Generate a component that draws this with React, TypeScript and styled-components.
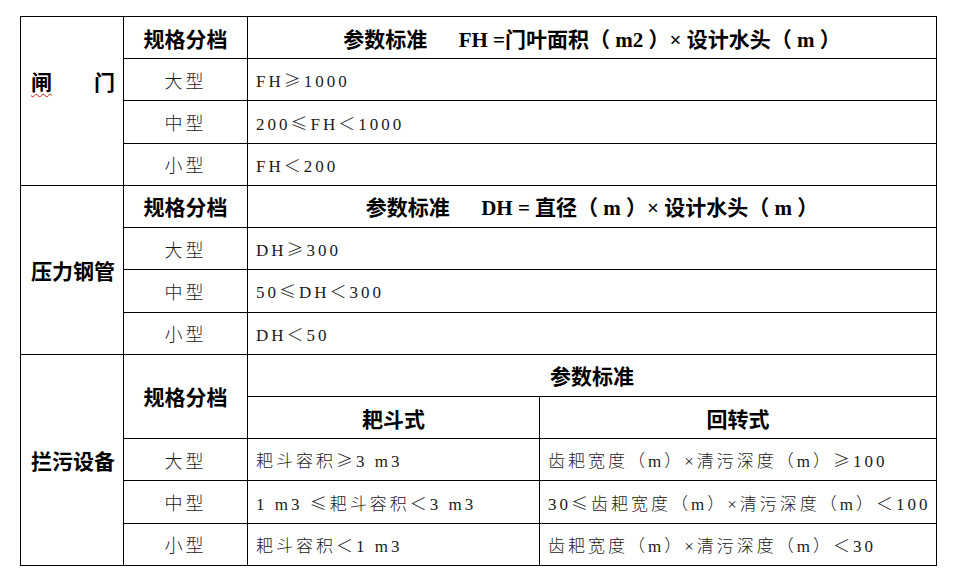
import styled, { createGlobalStyle } from "styled-components";

const GlobalStyle = createGlobalStyle`
  html, body {
    margin: 0;
    padding: 0;
    background: #ffffff;
  }
`;

type Row = { size: string; a: string; b?: string };

const gateRows: Row[] = [
  { size: "大型", a: "FH≥1000" },
  { size: "中型", a: "200≤FH＜1000" },
  { size: "小型", a: "FH＜200" },
];

const pipeRows: Row[] = [
  { size: "大型", a: "DH≥300" },
  { size: "中型", a: "50≤DH＜300" },
  { size: "小型", a: "DH＜50" },
];

const rackRows: Row[] = [
  { size: "大型", a: "耙斗容积≥3 m3", b: "齿耙宽度（m）×清污深度（m）≥100" },
  { size: "中型", a: "1 m3 ≤耙斗容积＜3 m3", b: "30≤齿耙宽度（m）×清污深度（m）＜100" },
  { size: "小型", a: "耙斗容积＜1 m3", b: "齿耙宽度（m）×清污深度（m）＜30" },
];

// the ≥ / ≤ signs come out wide in the original, so take them from the CJK face
const withSigns = (text: string) =>
  text.split(/([≥≤])/).map((part, i) =>
    part === "≥" || part === "≤" ? <Styled.Sign key={i}>{part}</Styled.Sign> : part
  );

export default function App() {
  return (
    <Styled.Page>
      <GlobalStyle />
      <Styled.Table>
        <colgroup>
          <col style={{ width: 103 }} />
          <col style={{ width: 124 }} />
          <col style={{ width: 292 }} />
          <col style={{ width: 397 }} />
        </colgroup>
        <tbody>
          <Styled.Tr>
            <Styled.Label rowSpan={4} $lift>
              <Styled.Spread>
                <Styled.Squiggle>闸</Styled.Squiggle>
                <span>门</span>
              </Styled.Spread>
            </Styled.Label>
            <Styled.Head>规格分档</Styled.Head>
            <Styled.Head colSpan={2}>
              参数标准&nbsp;&nbsp;&nbsp;&nbsp;&nbsp;&nbsp;FH =门叶面积（ m2 ）× 设计水头（ m ）
            </Styled.Head>
          </Styled.Tr>
          {gateRows.map((r) => (
            <Styled.Tr key={"g" + r.size}>
              <Styled.Size>{r.size}</Styled.Size>
              <Styled.Body colSpan={2}>{withSigns(r.a)}</Styled.Body>
            </Styled.Tr>
          ))}

          <Styled.Tr>
            <Styled.Label rowSpan={4}>压力钢管</Styled.Label>
            <Styled.Head>规格分档</Styled.Head>
            <Styled.Head colSpan={2}>
              参数标准&nbsp;&nbsp;&nbsp;&nbsp;&nbsp;&nbsp;DH = 直径（ m ）× 设计水头（ m ）
            </Styled.Head>
          </Styled.Tr>
          {pipeRows.map((r) => (
            <Styled.Tr key={"p" + r.size}>
              <Styled.Size>{r.size}</Styled.Size>
              <Styled.Body colSpan={2}>{withSigns(r.a)}</Styled.Body>
            </Styled.Tr>
          ))}

          <Styled.Tr>
            <Styled.Label rowSpan={5}>拦污设备</Styled.Label>
            <Styled.Head rowSpan={2}>规格分档</Styled.Head>
            <Styled.Head colSpan={2}>参数标准</Styled.Head>
          </Styled.Tr>
          <Styled.Tr>
            <Styled.Head>耙斗式</Styled.Head>
            <Styled.Head>回转式</Styled.Head>
          </Styled.Tr>
          {rackRows.map((r) => (
            <Styled.Tr key={"r" + r.size}>
              <Styled.Size>{r.size}</Styled.Size>
              <Styled.Body>{withSigns(r.a)}</Styled.Body>
              <Styled.Body>{withSigns(r.b ?? "")}</Styled.Body>
            </Styled.Tr>
          ))}
        </tbody>
      </Styled.Table>
    </Styled.Page>
  );
}

const Styled = {
  Page: styled.div`
    width: 958px;
    height: 585px;
    box-sizing: border-box;
    padding: 16px 0 0 20px;
    background: #ffffff;
  `,
  Table: styled.table`
    border-collapse: collapse;
    table-layout: fixed;
    width: 917px;
    color: #000;
  `,
  Tr: styled.tr`
    height: 42.23px;
  `,
  Label: styled.td<{ $lift?: boolean }>`
    border: 1px solid #000;
    padding: ${(p) => (p.$lift ? "0 8px 40px 10px" : "0 6px 0 10px")};
    font-family: "Liberation Serif", "Noto Sans CJK SC", serif;
    font-weight: 700;
    font-size: 21px;
    text-align: left;
    vertical-align: middle;
    white-space: nowrap;
  `,
  Spread: styled.div`
    display: flex;
    justify-content: space-between;
  `,
  Squiggle: styled.span`
    text-decoration: underline wavy #d42020;
    text-decoration-thickness: 1px;
    text-underline-offset: 3px;
  `,
  Head: styled.td`
    border: 1px solid #000;
    padding: 0;
    font-family: "Liberation Serif", "Noto Sans CJK SC", serif;
    font-weight: 700;
    font-size: 21px;
    text-align: center;
    vertical-align: middle;
    white-space: nowrap;
  `,
  Size: styled.td`
    border: 1px solid #000;
    padding: 0;
    font-family: "Liberation Serif", "Noto Sans CJK SC", serif;
    font-weight: 300;
    font-size: 18px;
    letter-spacing: 3px;
    text-align: center;
    vertical-align: middle;
    color: #1a1a1a;
  `,
  Body: styled.td`
    border: 1px solid #000;
    padding: 0 0 0 8px;
    font-family: "Liberation Serif", "Noto Sans CJK SC", serif;
    font-weight: 300;
    font-size: 17px;
    letter-spacing: 3px;
    text-align: left;
    vertical-align: middle;
    white-space: nowrap;
    color: #1a1a1a;
  `,
  Sign: styled.span`
    font-family: "Noto Sans CJK SC", sans-serif;
  `,
};
